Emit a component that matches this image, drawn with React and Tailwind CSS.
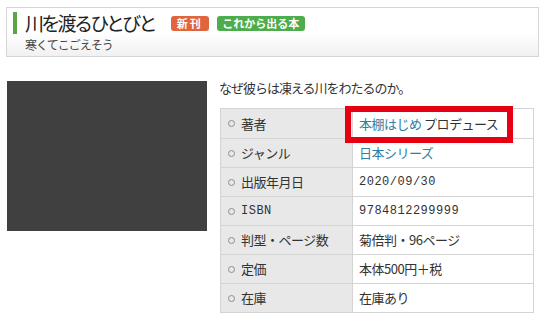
const rows = [
  { label: "著者", value: "author" },
  { label: "ジャンル", value: "genre" },
  { label: "出版年月日", value: "2020/09/30", mono: true },
  { label: "ISBN", value: "9784812299999", mono: true, monoLabel: true },
  { label: "判型・ページ数", value: "菊倍判・96ページ" },
  { label: "定価", value: "本体500円＋税" },
  { label: "在庫", value: "在庫あり" },
];

const jp = "font-['Noto_Sans_CJK_JP','Noto_Sans',sans-serif]";
const mono = "font-['Liberation_Mono','Noto_Sans_CJK_JP',monospace]";

function Value({ row }) {
  if (row.value === "author") {
    return (
      <span className="tracking-[-0.5px]">
        <span className="text-[#2f7fa3]">本棚はじめ</span> プロデュース
      </span>
    );
  }
  if (row.value === "genre") {
    return <span className="text-[#2f7fa3] tracking-[-0.5px]">日本シリーズ</span>;
  }
  if (row.mono) {
    return <span className={`${mono} text-[12px] tracking-[0.5px]`}>{row.value}</span>;
  }
  return <span className="tracking-[-0.5px]">{row.value}</span>;
}

export default function App() {
  return (
    <div className={`${jp} w-[543px] h-[319px] bg-white text-[#333] overflow-hidden pt-[7px] pl-[6px] pr-[4px]`}>
      {/* header */}
      <div className="h-[50px] border border-[#d6d6d6] bg-linear-to-b from-white from-50% to-[#f1f1f1] pl-[6px] pt-[4px]">
        <div className="flex items-center h-[22px] border-l-[4px] border-[#5aa545] pl-[8px]">
          <h1 className="text-[19px] leading-[22px] tracking-[-2.7px] text-[#222]">川を渡るひとびと</h1>
          <span className="ml-[16px] h-[15px] w-[38px] flex items-center justify-center rounded-[3px] bg-[#e0653d] text-white text-[11px] font-bold tracking-[2px] leading-none">
            新刊
          </span>
          <span className="ml-[8px] h-[15px] w-[88px] flex items-center justify-center rounded-[3px] bg-[#4dad4d] text-white text-[11px] font-bold leading-none">
            これから出る本
          </span>
        </div>
        <p className="pl-[12px] mt-[4px] text-[12px] leading-[14px] tracking-[-1px] text-[#444]">寒くてこごえそう</p>
      </div>

      {/* body */}
      <div className="flex mt-[24px] pl-[1px]">
        <div className="w-[200px] h-[150px] bg-[#404040] shrink-0" />
        <div className="ml-[12px] flex-1">
          <p className="text-[13px] leading-[16px] tracking-[-1px] -mt-[1px]">なぜ彼らは凍える川をわたるのか。</p>
          <div className="relative mt-[12px] ml-[1px] w-[314px]">
            <div className="border border-[#d4d4d4]">
              {rows.map((row, i) => (
                <div key={i} className={`flex h-[29px] text-[13px] ${i > 0 ? "border-t border-[#d4d4d4]" : ""}`}>
                  <div className="w-[132px] shrink-0 bg-[#e8e8e8] border-r border-[#d4d4d4] flex items-center pl-[7px]">
                    <span className="w-[7px] h-[7px] rounded-full border-[1.5px] border-[#8c8c8c] mr-[6px]" />
                    {row.monoLabel ? (
                      <span className={`${mono} text-[12px] tracking-[0.5px]`}>{row.label}</span>
                    ) : (
                      <span className="tracking-[-0.5px]">{row.label}</span>
                    )}
                  </div>
                  <div className="flex-1 bg-white flex items-center pl-[6px]">
                    <Value row={row} />
                  </div>
                </div>
              ))}
            </div>
            {/* highlight */}
            <div className="absolute left-[125px] -top-[2px] w-[168px] h-[37px] border-[6px] border-[#e60012]" />
          </div>
        </div>
      </div>
    </div>
  );
}
